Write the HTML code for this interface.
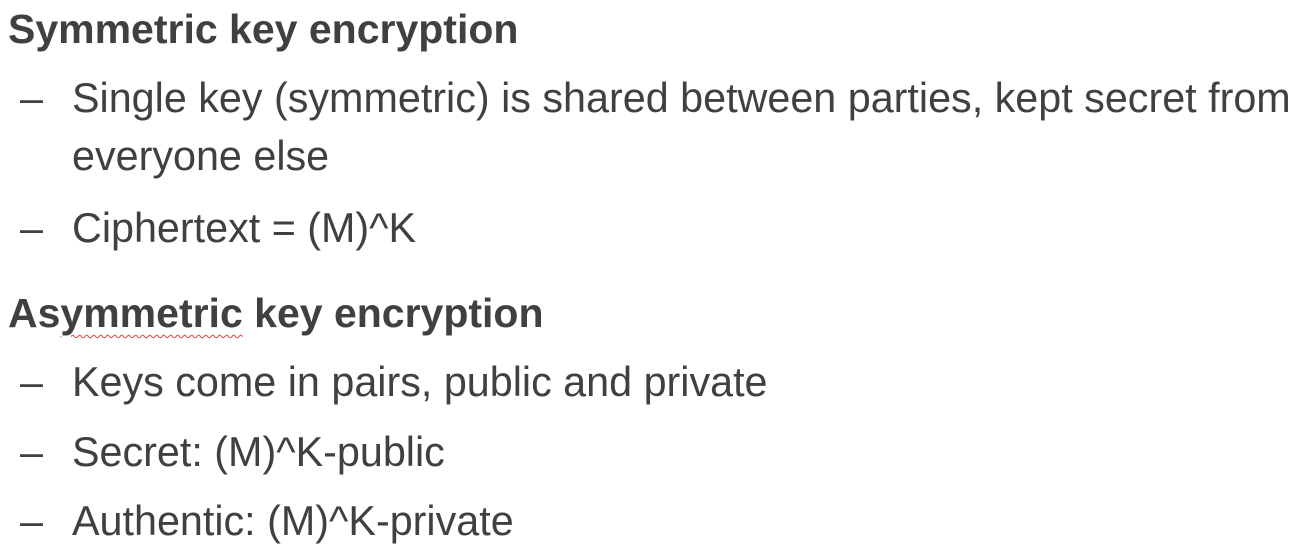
<!DOCTYPE html>
<html><head><style>
body{margin:0;width:1300px;height:554px;background:#fff;overflow:hidden;position:relative;font-family:"Liberation Sans",Arial,sans-serif;color:#404040}
.l{position:absolute;font-size:41.3px;line-height:40px;white-space:nowrap}
.h{left:8px;font-weight:bold;font-size:41px}
.d{left:20px}
.t{left:72px}
.sq{text-decoration:underline wavy #e04040;text-decoration-thickness:1px;text-underline-offset:7px}
</style></head><body>
<div class="l h" style="top:9px">Symmetric key encryption</div>
<div class="l d" style="top:78px">–</div><div class="l t" style="top:78px">Single key (symmetric) is shared between parties, kept secret from</div>
<div class="l t" style="top:136px">everyone else</div>
<div class="l d" style="top:208px">–</div><div class="l t" style="top:208px">Ciphertext = (M)^K</div>
<div class="l h" style="top:293px">As<span class="sq">ymmetric</span> key encryption</div>
<div class="l d" style="top:362px">–</div><div class="l t" style="top:362px">Keys come in pairs, public and private</div>
<div class="l d" style="top:432px">–</div><div class="l t" style="top:432px">Secret: (M)^K-public</div>
<div class="l d" style="top:501px">–</div><div class="l t" style="top:501px">Authentic: (M)^K-private</div>
</body></html>
